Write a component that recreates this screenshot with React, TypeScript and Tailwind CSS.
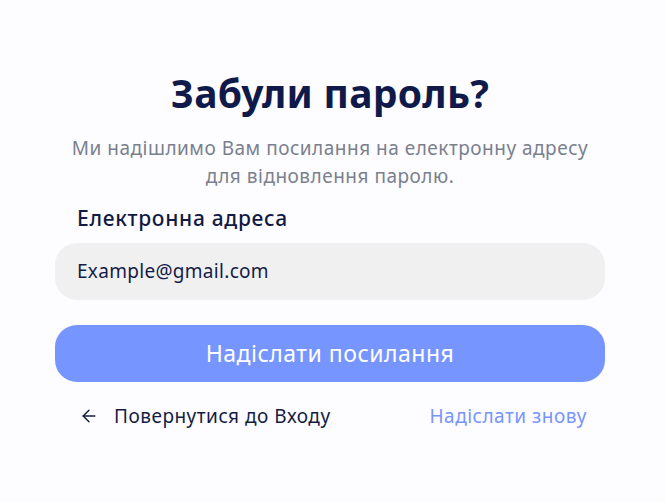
import { ArrowLeft } from "lucide-react";

export default function App() {
  return (
    <div
      className="min-h-[502px] w-full bg-[#fdfcfe] text-[#0f1a45]"
      style={{ fontFamily: '"Noto Sans", "Open Sans", sans-serif' }}
    >
      <div className="ml-[55px] flex w-[550px] flex-col pt-[69px]">
        <h1 className="text-center text-[39px] font-bold leading-[48px] tracking-[0.3px] text-[#101a4a]">
          Забули пароль?
        </h1>
        <p className="mt-[17px] text-center text-[19px] leading-[28px] tracking-[0.5px] text-[#7a808e]">
          Ми надішлимо Вам посилання на електронну адресу
          <br />
          для відновлення паролю.
        </p>
        <label className="mt-[12px] px-[22px] text-[21px] font-medium leading-[32px] tracking-[0.7px] text-[#121a44]">
          Електронна адреса
        </label>
        <div className="mt-[9px] flex h-[57px] items-center rounded-[22px] bg-[#f0f0f0] px-[22px] text-[19px] tracking-[0.3px] text-[#141c4a]">
          Example@gmail.com
        </div>
        <button className="mt-[25px] h-[57px] rounded-[22px] bg-[#7795ff] text-[23px] tracking-[0.5px] text-white">
          Надіслати посилання
        </button>
        <div className="mt-[20px] flex items-center justify-between pl-[24px] pr-[18px] text-[19px] tracking-[0.5px]">
          <a className="flex items-center gap-[15px] text-[#141c44]">
            <ArrowLeft className="h-[20px] w-[20px]" strokeWidth={1.7} />
            Повернутися до Входу
          </a>
          <a className="text-[#7795ff]">Надіслати знову</a>
        </div>
      </div>
    </div>
  );
}
